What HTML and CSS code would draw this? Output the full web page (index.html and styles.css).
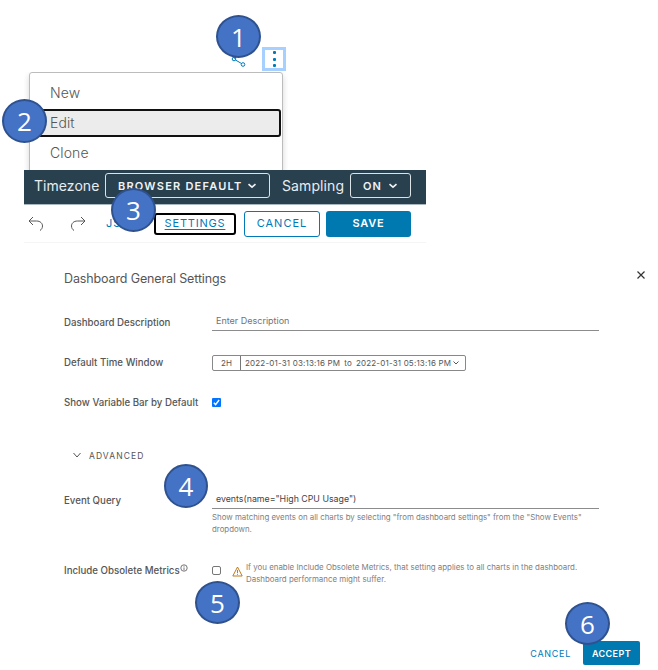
FILE: index.html
```html
<!DOCTYPE html>
<html lang="en">
<head>
<meta charset="utf-8">
<title>Dashboard General Settings</title>
<link rel="stylesheet" href="styles.css">
</head>
<body>
<main class="page">
  <section class="dashboard">
    <div class="actions">
      <svg class="share" width="16" height="14" viewBox="0 0 16 14"><path d="M5.500 6 11.500 9.500M4 4.500 11 0"/><circle cx="4" cy="5" r="1.800"/><circle cx="13" cy="10.500" r="1.800"/></svg>
      <button class="kebab"><i></i><i></i><i></i></button>
    </div>
    <div class="menu-clip">
      <div class="menu">
        <div class="item">New</div>
        <div class="item selected">Edit</div>
        <div class="item">Clone</div>
      </div>
    </div>
    <div class="header">
      <span class="tz">Timezone</span>
      <button class="dark browser"><span>BROWSER DEFAULT</span><svg width="10" height="8" viewBox="0 0 10 8"><path d="M1.500 2.200 5 5.200 8.500 2.200"/></svg></button>
      <span class="sampling">Sampling</span>
      <button class="dark on"><span>ON</span><svg width="10" height="8" viewBox="0 0 10 8"><path d="M1.500 2.200 5 5.200 8.500 2.200"/></svg></button>
    </div>
    <div class="toolbar">
      <svg class="undo" width="16" height="16" viewBox="0 0 16 16"><path d="M5 1 1 5l4 4M1 5h7.500c4 0 6 2.500 6 5 0 2-1 3.500-2.500 4.500"/></svg>
      <svg class="redo" width="16" height="16" viewBox="0 0 16 16"><path d="m11 1 4 4-4 4M15 5H7.500c-4 0-6 2.500-6 5 0 2 1 3.500 2.500 4.500"/></svg>
      <span class="json">JSON</span>
      <button class="settings">SETTINGS</button>
      <button class="cancel">CANCEL</button>
      <button class="save">SAVE</button>
    </div>
  </section>
  <section class="dialog">
    <header class="title"><h1>Dashboard General Settings</h1><svg width="10" height="10" viewBox="0 0 10 10"><path d="m1.500 1.500 7 7m0-7-7 7"/></svg></header>
    <div class="row r1"><label>Dashboard Description</label><div class="field placeholder">Enter Description</div></div>
    <div class="row r2"><label>Default Time Window</label>
      <div class="window"><span class="span">2H</span><span class="range"><span>2022-01-31 03:13:16 PM</span><span>to</span><span>2022-01-31 05:13:16 PM</span></span><svg width="8" height="6" viewBox="0 0 8 6"><path d="m1.500 1.500 2.500 2.500 2.500-2.500"/></svg></div></div>
    <div class="row r3"><label>Show Variable Bar by Default</label><svg class="check" width="9" height="9" viewBox="0 0 9 9"><path d="m1.800 4.800 1.800 1.800 3.500-4.600"/></svg></div>
    <div class="advanced"><svg width="10" height="8" viewBox="0 0 10 8"><path d="M1.500 1 5 5 8.500 1"/></svg><span>ADVANCED</span></div>
    <div class="row r4"><label>Event Query</label><div class="field query">events(name="High CPU Usage")</div></div>
    <p class="hint">Show matching events on all charts by selecting "from dashboard settings" from the "Show Events"<br>dropdown.</p>
    <div class="row r5"><label>Include Obsolete Metrics</label><svg class="info" width="8" height="8" viewBox="0 0 8 8"><circle cx="4" cy="4" r="3.200"/><path d="M4 3.400v2.800M4 1.800v.9"/></svg>
      <span class="box"></span>
      <svg class="warn" width="11" height="11" viewBox="0 0 11 11"><path d="M5.500 1 10.200 10H.8ZM5.500 4v3M5.500 7.800v1"/></svg>
      <p class="note">If you enable Include Obsolete Metrics, that setting applies to all charts in the dashboard.<br>Dashboard performance might suffer.</p></div>
    <footer class="footer"><span class="dismiss">CANCEL</span><button class="accept">ACCEPT</button></footer>
  </section>
  <span class="badge b1">1</span>
  <span class="badge b2">2</span>
  <span class="badge b3">3</span>
  <span class="badge b4">4</span>
  <span class="badge b5">5</span>
  <span class="badge b6">6</span>
</main>
</body>
</html>
```
FILE: styles.css
```css
* { box-sizing: border-box; }
body { margin: 0; background: #fff; color: #565656; font-family: Inter, "Open Sans", sans-serif; }
button { font: inherit; margin: 0; padding: 0; border: 0; background: none; }
svg { display: block; flex: none; fill: none; stroke: currentColor; }
h1, p { margin: 0; font-weight: 400; }
.page { position: relative; width: 658px; height: 670px; overflow: hidden; white-space: nowrap; }
.dashboard { width: 402px; margin-left: 24px; padding-top: 47px; }
.actions { display: flex; height: 25px; padding-left: 206px; color: #0079b8; }
.share { margin-top: 7px; }
.kebab { width: 24px; height: 24px; margin-left: 16px; border: 3px solid #a6d0ff; display: flex; flex-direction: column; align-items: center; justify-content: space-between; padding: 1px 0; }
.kebab i { width: 3px; height: 3px; border-radius: 1px; background: #0079b8; }
.menu-clip { width: 264px; height: 98px; padding: 0 5px; overflow: hidden; }
.menu { width: 254px; height: 130px; padding: 6px 1px; border: 1px solid #bcbcbc; border-radius: 3px; box-shadow: 0 3px 6px rgba(0,0,0,.16); }
.item { height: 30px; padding-left: 19px; font-size: 14px; font-weight: 300; letter-spacing: .1px; line-height: 28px; }
.selected { height: 28px; margin-bottom: 2px; padding-left: 17px; border: 2px solid #111; border-radius: 3px; background: #ececec; line-height: 24px; }
.header { height: 35px; display: flex; padding: 3px 0 0 10px; background: #29404e; border-bottom: 1px solid #a9b8c0; color: #e8edf0; }
.header > span { font-size: 14px; line-height: 25px; }
.tz { width: 71px; letter-spacing: .05px; }
.dark { height: 25px; border: 1px solid #dce3e7; border-radius: 3px; display: flex; align-items: center; color: #f0f3f5; font-size: 11px; font-weight: 600; text-align: left; }
.dark svg { stroke-width: 1.600; }
.browser { width: 165px; padding-left: 12px; letter-spacing: 1.220px; }
.browser span { width: 129px; }
.sampling { width: 80px; padding-left: 12px; letter-spacing: .1px; }
.on { width: 61px; padding-left: 12px; letter-spacing: 1px; }
.on span { width: 25px; }
.toolbar { height: 38px; display: flex; padding-top: 5px; border-bottom: 1px solid #f5f5f5; color: #0079b8; font-size: 11px; letter-spacing: .9px; }
.undo, .redo { color: #565656; margin-top: 6px; }
.undo { margin-left: 4px; }
.redo { margin-left: 26px; }
.json { width: 48px; margin-left: 20px; line-height: 26px; }
.settings { width: 82px; height: 22px; margin-top: 3px; padding-bottom: 2px; border: 2px solid #000; border-radius: 3px; color: inherit; text-decoration: underline; text-underline-offset: 2px; letter-spacing: .8px; }
.cancel { width: 76px; height: 26px; margin: 1px 0 0 8px; padding-bottom: 2px; border: 1px solid #0079b8; border-radius: 3px; color: inherit; letter-spacing: 1px; }
.save { width: 85px; height: 26px; margin: 1px 0 0 6px; padding-bottom: 2px; border-radius: 3px; background: #0079b0; color: #fff; font-weight: 600; letter-spacing: .8px; }
.dialog { padding: 25px 18px 0 64px; font-size: 9.700px; }
.title { height: 22px; display: flex; justify-content: space-between; }
.title svg { margin: 2px -6px 0 0; color: #333; stroke-width: 1.200; }
h1 { font-size: 12.500px; letter-spacing: -.13px; line-height: 22px; }
.row { display: flex; height: 20px; }
.row label { width: 148px; font-weight: 500; line-height: 22px; }
.r1 { margin-top: 22px; }
.field { width: 387px; height: 19px; padding-left: 4px; border-bottom: 1px solid #8c8c8c; font-size: 9px; line-height: 17px; }
.placeholder { color: #737373; }
.r2 { margin-top: 20px; }
.window { width: 254px; height: 16px; margin-top: 3px; border: 1px solid #888; border-radius: 2px; display: flex; align-items: center; font-size: 8px; }
.span { width: 28px; height: 14px; line-height: 14px; border-right: 1px solid #777; text-align: center; }
.range { width: 211px; padding-left: 4px; display: flex; gap: 4px; letter-spacing: .18px; }
.r3 { margin-top: 20px; }
.check { margin-top: 6px; background: #0075ff; border-radius: 1px; color: #fff; stroke-width: 1.400; }
.advanced { margin-top: 34px; height: 20px; padding-left: 8px; display: flex; gap: 7px; align-items: center; font-size: 8.500px; letter-spacing: 1.080px; }
.r4 { margin-top: 24px; }
.query { font-size: 8.800px; color: #444; }
.hint, .note { font-size: 7.860px; line-height: 12px; color: #808080; }
.hint { margin: 1px 0 0 148px; }
.r5 { margin-top: 25px; height: 24px; }
.r5 label { width: 116px; }
.info { margin-top: 4px; stroke-width: .8; }
.box { width: 9px; height: 9px; margin: 6px 0 0 24px; border: 1px solid #767676; border-radius: 2px; }
.warn { margin: 6px 0 0 11px; color: #c27b1a; }
.note { margin: 1px 0 0 3px; font-size: 7.900px; }
.footer { display: flex; justify-content: flex-end; margin-top: 57px; font-size: 9px; letter-spacing: .7px; color: #0079b8; line-height: 25px; }
.accept { width: 57px; height: 24px; margin-left: 12px; border-radius: 2px; background: #0079b0; color: #fff; font-weight: 600; letter-spacing: .4px; }
.badge { position: absolute; width: 45px; height: 43px; border: 2px solid #2f528f; border-radius: 50%; background: #4472c4; color: #fff; font: 26px/40px "Open Sans", sans-serif; text-align: center; }
.b1 { left: 216px; top: 15px; }
.b2 { left: 2px; top: 99px; height: 44px; }
.b3 { left: 111px; top: 188px; height: 44px; }
.b4 { left: 164px; top: 464px; height: 44px; width: 44px; }
.b5 { left: 195px; top: 581px; }
.b6 { left: 565px; top: 602px; }
```
